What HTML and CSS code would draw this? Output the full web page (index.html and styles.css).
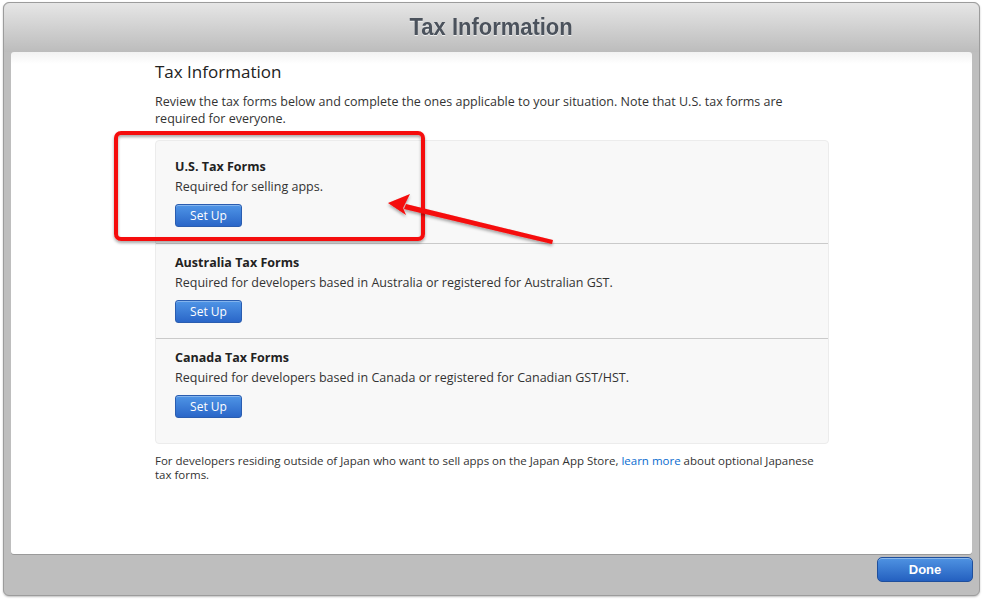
FILE: index.html
```html
<!DOCTYPE html>
<html>
<head>
<meta charset="utf-8">
<link rel="stylesheet" href="styles.css">
</head>
<body>
<div class="window">
  <div class="titlebar"><h1 class="wtitle">Tax Information</h1></div>
  <div class="panel">
    <div class="content">
      <h2 class="heading">Tax Information</h2>
      <p class="intro">Review the tax forms below and complete the ones applicable to your situation. Note that U.S. tax forms are required for everyone.</p>
      <div class="forms">
        <div class="form">
          <div class="ftitle">U.S. Tax Forms</div>
          <div class="fdesc">Required for selling apps.</div>
          <button class="btn">Set Up</button>
        </div>
        <div class="form">
          <div class="ftitle">Australia Tax Forms</div>
          <div class="fdesc">Required for developers based in Australia or registered for Australian GST.</div>
          <button class="btn">Set Up</button>
        </div>
        <div class="form">
          <div class="ftitle">Canada Tax Forms</div>
          <div class="fdesc">Required for developers based in Canada or registered for Canadian GST/HST.</div>
          <button class="btn">Set Up</button>
        </div>
      </div>
      <p class="note">For developers residing outside of Japan who want to sell apps on the Japan App Store, <a class="link" href="#">learn more</a> about optional Japanese tax forms.</p>
    </div>
  </div>
  <div class="footer"><button class="done">Done</button></div>
</div>
<svg class="annot" width="983" height="603" viewBox="0 0 983 603">
  <defs>
    <filter id="sh" x="-10%" y="-10%" width="120%" height="130%">
      <feDropShadow dx="0" dy="2" stdDeviation="1.5" flood-color="#000" flood-opacity="0.35"/>
    </filter>
  </defs>
  <rect x="116" y="133" width="307" height="106" rx="5" fill="none" stroke="#f50a0a" stroke-width="4" filter="url(#sh)"/>
  <g filter="url(#sh)" fill="#f50a0a">
    <polygon points="553,240 552,244 404,209 406,204"/>
    <polygon points="388,203 410,194 403,208 406,215"/>
  </g>
</svg>
</body>
</html>
```
FILE: styles.css
```css
html, body { margin: 0; padding: 0; background: #ffffff; }
body { width: 983px; height: 603px; position: relative; overflow: hidden; font-family: "Open Sans", "DejaVu Sans", sans-serif; }

.window {
  position: absolute; left: 3px; top: 2px;
  width: 975px; height: 592px;
  border: 1px solid #9c9c9c; border-radius: 6px;
  background: #bebebe;
  display: flex; flex-direction: column;
  box-shadow: 0 1px 2px rgba(0,0,0,0.25);
}
.titlebar {
  height: 49px; flex: none;
  background: linear-gradient(#e6e6e6, #bcbcbc);
  border-radius: 6px 6px 0 0;
  display: flex; align-items: center; justify-content: center;
}
.wtitle {
  margin: 0; padding-bottom: 2px;
  font-family: "Liberation Sans", sans-serif;
  font-weight: bold; font-size: 24px; color: #4b525c;
  text-shadow: 0 1px 0 rgba(255,255,255,0.7);
  transform: scaleX(0.915);
}
.panel {
  margin: 0 7px; height: 502px; flex: none;
  background: linear-gradient(#f2f2f2, #ffffff 12px);
  border-radius: 3px;
  box-shadow: 0 1px 0 #9a9a9a;
}
.content { width: 674px; padding: 9px 0 0 144px; color: #262626; }
.heading { margin: 0; font-weight: normal; font-size: 17px; line-height: 22px; color: #222; }
.intro { margin: 10px 0 0; font-size: 12.5px; line-height: 17px; color: #333; }
.forms {
  margin-top: 13px;
  background: #f8f8f8;
  border: 1px solid #ececec; border-radius: 4px;
}
.form { height: 95px; padding: 10px 0 0 19px; box-sizing: border-box; border-top: 1px solid #cacaca; }
.form:first-child { border-top: none; height: 102px; padding-top: 17px; }
.form:last-child { height: 105px; }
.ftitle { font-weight: bold; font-size: 12.5px; line-height: 17px; color: #222; }
.fdesc { font-size: 12.5px; line-height: 17px; margin-top: 3px; color: #333; }
.btn {
  display: block;
  margin-top: 9px; width: 67px; height: 23px;
  border: 1px solid #2a5db0; border-radius: 3px;
  background: linear-gradient(#4f95e6, #2a66c8);
  color: #fff; font-family: "Open Sans", sans-serif; font-size: 12px;
  padding: 0; box-shadow: inset 0 1px 0 rgba(255,255,255,0.3);
}
.note { margin: 10px 0 0; font-size: 11.5px; line-height: 14px; color: #333; }
.link { color: #0a6ccf; text-decoration: none; }
.footer { flex: 1; display: flex; justify-content: flex-end; align-items: flex-start; padding: 3px 6px 0 0; }
.done {
  width: 96px; height: 25px;
  border: 1px solid #1f4f9c; border-radius: 5px;
  background: linear-gradient(#4f93e2, #2460c0);
  color: #fff; font-family: "Liberation Sans", sans-serif; font-weight: bold; font-size: 13px;
  box-shadow: inset 0 1px 0 rgba(255,255,255,0.35);
}
.annot { position: absolute; left: 0; top: 0; pointer-events: none; }
```
